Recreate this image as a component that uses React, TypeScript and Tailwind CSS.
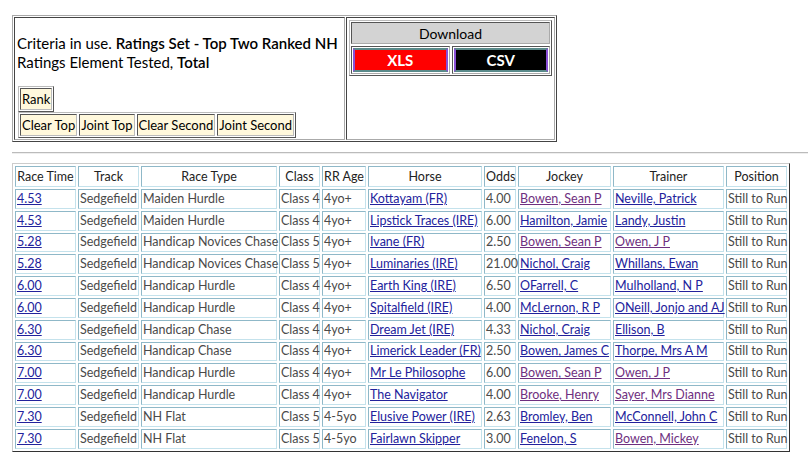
import React from "react";

type Row = {
  time: string;
  type: string;
  cls: string;
  age: string;
  horse: string;
  odds: string;
  jockey: string;
  jv?: boolean;
  trainer: string;
  tv?: boolean;
};

const rows: Row[] = [
  { time: "4.53", type: "Maiden Hurdle", cls: "Class 4", age: "4yo+", horse: "Kottayam (FR)", odds: "4.00", jockey: "Bowen, Sean P", jv: true, trainer: "Neville, Patrick" },
  { time: "4.53", type: "Maiden Hurdle", cls: "Class 4", age: "4yo+", horse: "Lipstick Traces (IRE)", odds: "6.00", jockey: "Hamilton, Jamie", trainer: "Landy, Justin" },
  { time: "5.28", type: "Handicap Novices Chase", cls: "Class 5", age: "4yo+", horse: "Ivane (FR)", odds: "2.50", jockey: "Bowen, Sean P", jv: true, trainer: "Owen, J P", tv: true },
  { time: "5.28", type: "Handicap Novices Chase", cls: "Class 5", age: "4yo+", horse: "Luminaries (IRE)", odds: "21.00", jockey: "Nichol, Craig", trainer: "Whillans, Ewan" },
  { time: "6.00", type: "Handicap Hurdle", cls: "Class 4", age: "4yo+", horse: "Earth King (IRE)", odds: "6.50", jockey: "OFarrell, C", trainer: "Mulholland, N P" },
  { time: "6.00", type: "Handicap Hurdle", cls: "Class 4", age: "4yo+", horse: "Spitalfield (IRE)", odds: "4.00", jockey: "McLernon, R P", trainer: "ONeill, Jonjo and AJ" },
  { time: "6.30", type: "Handicap Chase", cls: "Class 4", age: "4yo+", horse: "Dream Jet (IRE)", odds: "4.33", jockey: "Nichol, Craig", trainer: "Ellison, B" },
  { time: "6.30", type: "Handicap Chase", cls: "Class 4", age: "4yo+", horse: "Limerick Leader (FR)", odds: "2.50", jockey: "Bowen, James C", trainer: "Thorpe, Mrs A M" },
  { time: "7.00", type: "Handicap Hurdle", cls: "Class 4", age: "4yo+", horse: "Mr Le Philosophe", odds: "6.00", jockey: "Bowen, Sean P", jv: true, trainer: "Owen, J P", tv: true },
  { time: "7.00", type: "Handicap Hurdle", cls: "Class 4", age: "4yo+", horse: "The Navigator", odds: "4.00", jockey: "Brooke, Henry", jv: true, trainer: "Sayer, Mrs Dianne", tv: true },
  { time: "7.30", type: "NH Flat", cls: "Class 5", age: "4-5yo", horse: "Elusive Power (IRE)", odds: "2.63", jockey: "Bromley, Ben", trainer: "McConnell, John C" },
  { time: "7.30", type: "NH Flat", cls: "Class 5", age: "4-5yo", horse: "Fairlawn Skipper", odds: "3.00", jockey: "Fenelon, S", trainer: "Bowen, Mickey", tv: true },
];

const cell =
  "border border-t-[#8fb8c8] border-l-[#8fb8c8] border-r-[#c4e2ec] border-b-[#c4e2ec] px-[1px] py-0 whitespace-nowrap";

const link = "text-[#22229c] underline";
const visited = "text-[#6e2f80] underline";

function Btn({ children }: { children: React.ReactNode }) {
  return (
    <div className="border border-t-[#555] border-l-[#555] border-r-[#bbb] border-b-[#bbb] bg-[#fff8dc] px-[1px] h-[22px] flex items-center text-[13px] text-black">
      {children}
    </div>
  );
}

export default function App() {
  return (
    <div className="bg-white w-[808px] h-[471px] overflow-hidden pt-[15px] text-[#4a4a4a]" style={{ fontFamily: "Lato, 'Open Sans', sans-serif" }}>
      <div className="ml-[12px] w-[545px] h-[127px] border border-t-[#a8a8a8] border-l-[#a8a8a8] border-r-[#444] border-b-[#444] p-[1px] flex gap-[1px]">
        <div className="w-[331px] h-full border border-t-[#444] border-l-[#444] border-r-[#aaa] border-b-[#aaa] pt-[16px] px-[2px] text-[15px] leading-[19px] text-black">
          <div>
            Criteria in use. <b className="font-semibold">Ratings Set - Top Two Ranked NH</b>
          </div>
          <div>
            Ratings Element Tested, <b className="font-semibold">Total</b>
          </div>
          <div className="mt-[14px] ml-[1px] inline-flex border border-t-[#bbb] border-l-[#bbb] border-r-[#555] border-b-[#555] p-[1px]">
            <Btn>Rank</Btn>
          </div>
          <div className="ml-[1px] flex w-fit border border-t-[#bbb] border-l-[#bbb] border-r-[#555] border-b-[#555] p-[1px] gap-[2px]">
            <Btn>Clear Top</Btn>
            <Btn>Joint Top</Btn>
            <Btn>Clear Second</Btn>
            <Btn>Joint Second</Btn>
          </div>
        </div>
        <div className="flex-1 h-full border border-t-[#444] border-l-[#444] border-r-[#aaa] border-b-[#aaa] p-[2px]">
          <div className="border border-t-[#bbb] border-l-[#bbb] border-r-[#555] border-b-[#555] p-[1px] flex flex-col gap-[2px]">
            <div className="h-[22px] bg-[#d3d3d3] border border-t-[#555] border-l-[#555] border-r-[#aaa] border-b-[#aaa] flex items-center justify-center text-[14px] text-black">
              Download
            </div>
            <div className="flex gap-[2px]">
              <div className="flex-1 border border-t-[#555] border-l-[#555] border-r-[#aaa] border-b-[#aaa] p-[1px]">
                <div className="h-[24px] bg-[#ff0000] border-2 border-t-[#5a8a8a] border-l-[#8a4fd6] border-r-[#8a4fd6] border-b-[#5a8a8a] flex items-center justify-center text-white font-bold text-[15px]">
                  XLS
                </div>
              </div>
              <div className="flex-1 border border-t-[#555] border-l-[#555] border-r-[#aaa] border-b-[#aaa] p-[1px]">
                <div className="h-[24px] bg-black border-2 border-t-[#5a8a8a] border-l-[#8a4fd6] border-r-[#8a4fd6] border-b-[#5a8a8a] flex items-center justify-center text-white font-bold text-[15px]">
                  CSV
                </div>
              </div>
            </div>
          </div>
        </div>
      </div>

      <div className="ml-[12px] mt-[10px] border-t border-t-[#bbb] border-b border-b-[#eee]" />

      <table className="ml-[12px] mt-[9px] table-fixed w-[777px] border-separate border-spacing-[2px] border border-t-[#ccc] border-l-[#ccc] border-r-[#333] border-b-[#333] text-[12.5px] leading-[16px]">
        <thead>
          <tr className="text-[#222] h-[21px]">
            <th className={`${cell} font-normal w-[61px]`}>Race Time</th>
            <th className={`${cell} font-normal w-[61px]`}>Track</th>
            <th className={`${cell} font-normal w-[136px]`}>Race Type</th>
            <th className={`${cell} font-normal w-[41px]`}>Class</th>
            <th className={`${cell} font-normal w-[44px]`}>RR Age</th>
            <th className={`${cell} font-normal w-[114px]`}>Horse</th>
            <th className={`${cell} font-normal w-[32px]`}>Odds</th>
            <th className={`${cell} font-normal w-[93px]`}>Jockey</th>
            <th className={`${cell} font-normal w-[111px]`}>Trainer</th>
            <th className={`${cell} font-normal w-[61px]`}>Position</th>
          </tr>
        </thead>
        <tbody>
          {rows.map((r, i) => (
            <tr key={i} className="h-[19.8px]">
              <td className={cell}><a className={link}>{r.time}</a></td>
              <td className={cell}>Sedgefield</td>
              <td className={cell}>{r.type}</td>
              <td className={cell}>{r.cls}</td>
              <td className={cell}>{r.age}</td>
              <td className={cell}><a className={link}>{r.horse}</a></td>
              <td className={cell}>{r.odds}</td>
              <td className={cell}><a className={r.jv ? visited : link}>{r.jockey}</a></td>
              <td className={cell}><a className={r.tv ? visited : link}>{r.trainer}</a></td>
              <td className={cell}>Still to Run</td>
            </tr>
          ))}
        </tbody>
      </table>
    </div>
  );
}
